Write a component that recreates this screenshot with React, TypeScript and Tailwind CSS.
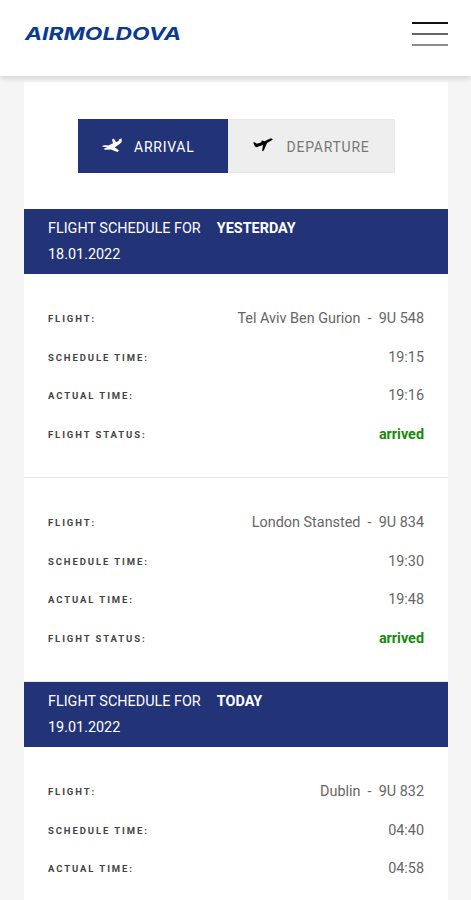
type TFlight = {
    place: string,
    code: string,
    schedule: string,
    actual: string,
    status?: string
}

type TDay = {
    label: string,
    date: string,
    flights: TFlight[]
}

const days: TDay[] = [
    {
        label: "YESTERDAY",
        date: "18.01.2022",
        flights: [
            { place: "Tel Aviv Ben Gurion", code: "9U 548", schedule: "19:15", actual: "19:16", status: "arrived" },
            { place: "London Stansted", code: "9U 834", schedule: "19:30", actual: "19:48", status: "arrived" },
        ],
    },
    {
        label: "TODAY",
        date: "19.01.2022",
        flights: [
            { place: "Dublin", code: "9U 832", schedule: "04:40", actual: "04:58" },
        ],
    },
];

const Logo = () => (
    <svg width="160" height="20" viewBox="0 0 160 20" role="img" aria-label="AIRMOLDOVA">
        <text
            x="1"
            y="16"
            textLength="156"
            lengthAdjust="spacingAndGlyphs"
            className="fill-[#0b3a95] font-['Inter',sans-serif] text-[17.5px] font-bold italic"
        >
            AIRMOLDOVA
        </text>
    </svg>
);

const ArrivalIcon = () => (
    <svg width="21" height="16" viewBox="0 0 21 16" fill="currentColor">
        <path d="M0.2 8.4C0.8 7.2 3.2 7.2 6.4 7.6L11 5.2 10 1.6 12 0.6 13.8 4 16.4 3.2 17.4 1 19.6 0.6 19.8 3.4C19.4 4.8 16.6 6.6 12.8 9.2L17 12.6 15.4 14 9 11.4 2.4 11.8 2.2 10.6 5.4 9.4Z" />
    </svg>
);

const DepartureIcon = () => (
    <svg width="21" height="16" viewBox="0 0 21 16" fill="currentColor">
        <path d="M0.2 4.6 1.6 4.2 4 5.8 8.6 4.2 8.2 3 9.2 2.6 11.6 3.2 17.2 0.6C19 0 20.2 0.8 19.2 2L14 5 10.8 12.4 9 13.2 10 7 3.4 9.2C2.2 9.2 1.6 8.2 0.2 4.6Z" />
    </svg>
);

const Row = ({ label, children }: { label: string, children: React.ReactNode }) => (
    <div className="flex h-[38.5px] items-center justify-between">
        <span className="pt-[2.5px] text-[9.5px] font-bold tracking-[1.9px] text-[#444]">{label}</span>
        <span className="whitespace-pre pt-[1.5px] text-[14.4px] text-[#666]">{children}</span>
    </div>
);

const Flight = ({ flight }: { flight: TFlight }) => (
    <div className="h-[204px] border-b border-[#e8e8e8] px-6 pt-[24.9px]">
        <Row label="FLIGHT:">{flight.place}{"  -  "}{flight.code}</Row>
        <Row label="SCHEDULE TIME:">{flight.schedule}</Row>
        <Row label="ACTUAL TIME:">{flight.actual}</Row>
        {flight.status && (
            <Row label="FLIGHT STATUS:">
                <span className="font-bold text-[#188a0c]">{flight.status}</span>
            </Row>
        )}
    </div>
);

const App = () => {
    return (
        <div className="h-[900px] w-[471px] overflow-hidden bg-[#f5f5f5] font-['Roboto',sans-serif]">
            <header className="relative flex h-[76px] items-center justify-between bg-white pr-[23px] pl-6 pb-[9px] shadow-[0_2px_6px_rgba(0,0,0,0.15)]">
                <Logo />
                <button className="flex w-9 flex-col gap-[9px]" aria-label="Menu">
                    <span className="h-0.5 w-full bg-[#111]"></span>
                    <span className="h-0.5 w-full bg-[#666]"></span>
                    <span className="h-0.5 w-full bg-[#8c8c8c]"></span>
                </button>
            </header>
            <main className="mr-[23px] ml-6 mt-1.5 bg-white pt-[37px]">
                <div className="mb-[36.5px] ml-[54px] flex h-[53.5px] w-[317px] text-[14px] tracking-[0.75px]">
                    <button className="flex w-[150px] items-center bg-[#223378] pl-6 text-white">
                        <ArrivalIcon />
                        <span className="ml-[11px] pt-[3px]">ARRIVAL</span>
                    </button>
                    <button className="flex flex-1 items-center border border-[#e8e8e8] bg-[#eeeeee] pl-6">
                        <DepartureIcon />
                        <span className="ml-[12.5px] pt-[3px] text-[#777]">DEPARTURE</span>
                    </button>
                </div>
                {days.map((day) => (
                    <section key={day.label}>
                        <div className="h-[65px] bg-[#223378] px-6 pt-[7px] text-[14.4px] leading-[26px] text-white">
                            <div>
                                FLIGHT SCHEDULE FOR <b className="ml-[12.5px]">{day.label}</b>
                            </div>
                            <div>{day.date}</div>
                        </div>
                        {day.flights.map((flight) => (
                            <Flight key={flight.code} flight={flight} />
                        ))}
                    </section>
                ))}
            </main>
        </div>
    );
};

export default App;
